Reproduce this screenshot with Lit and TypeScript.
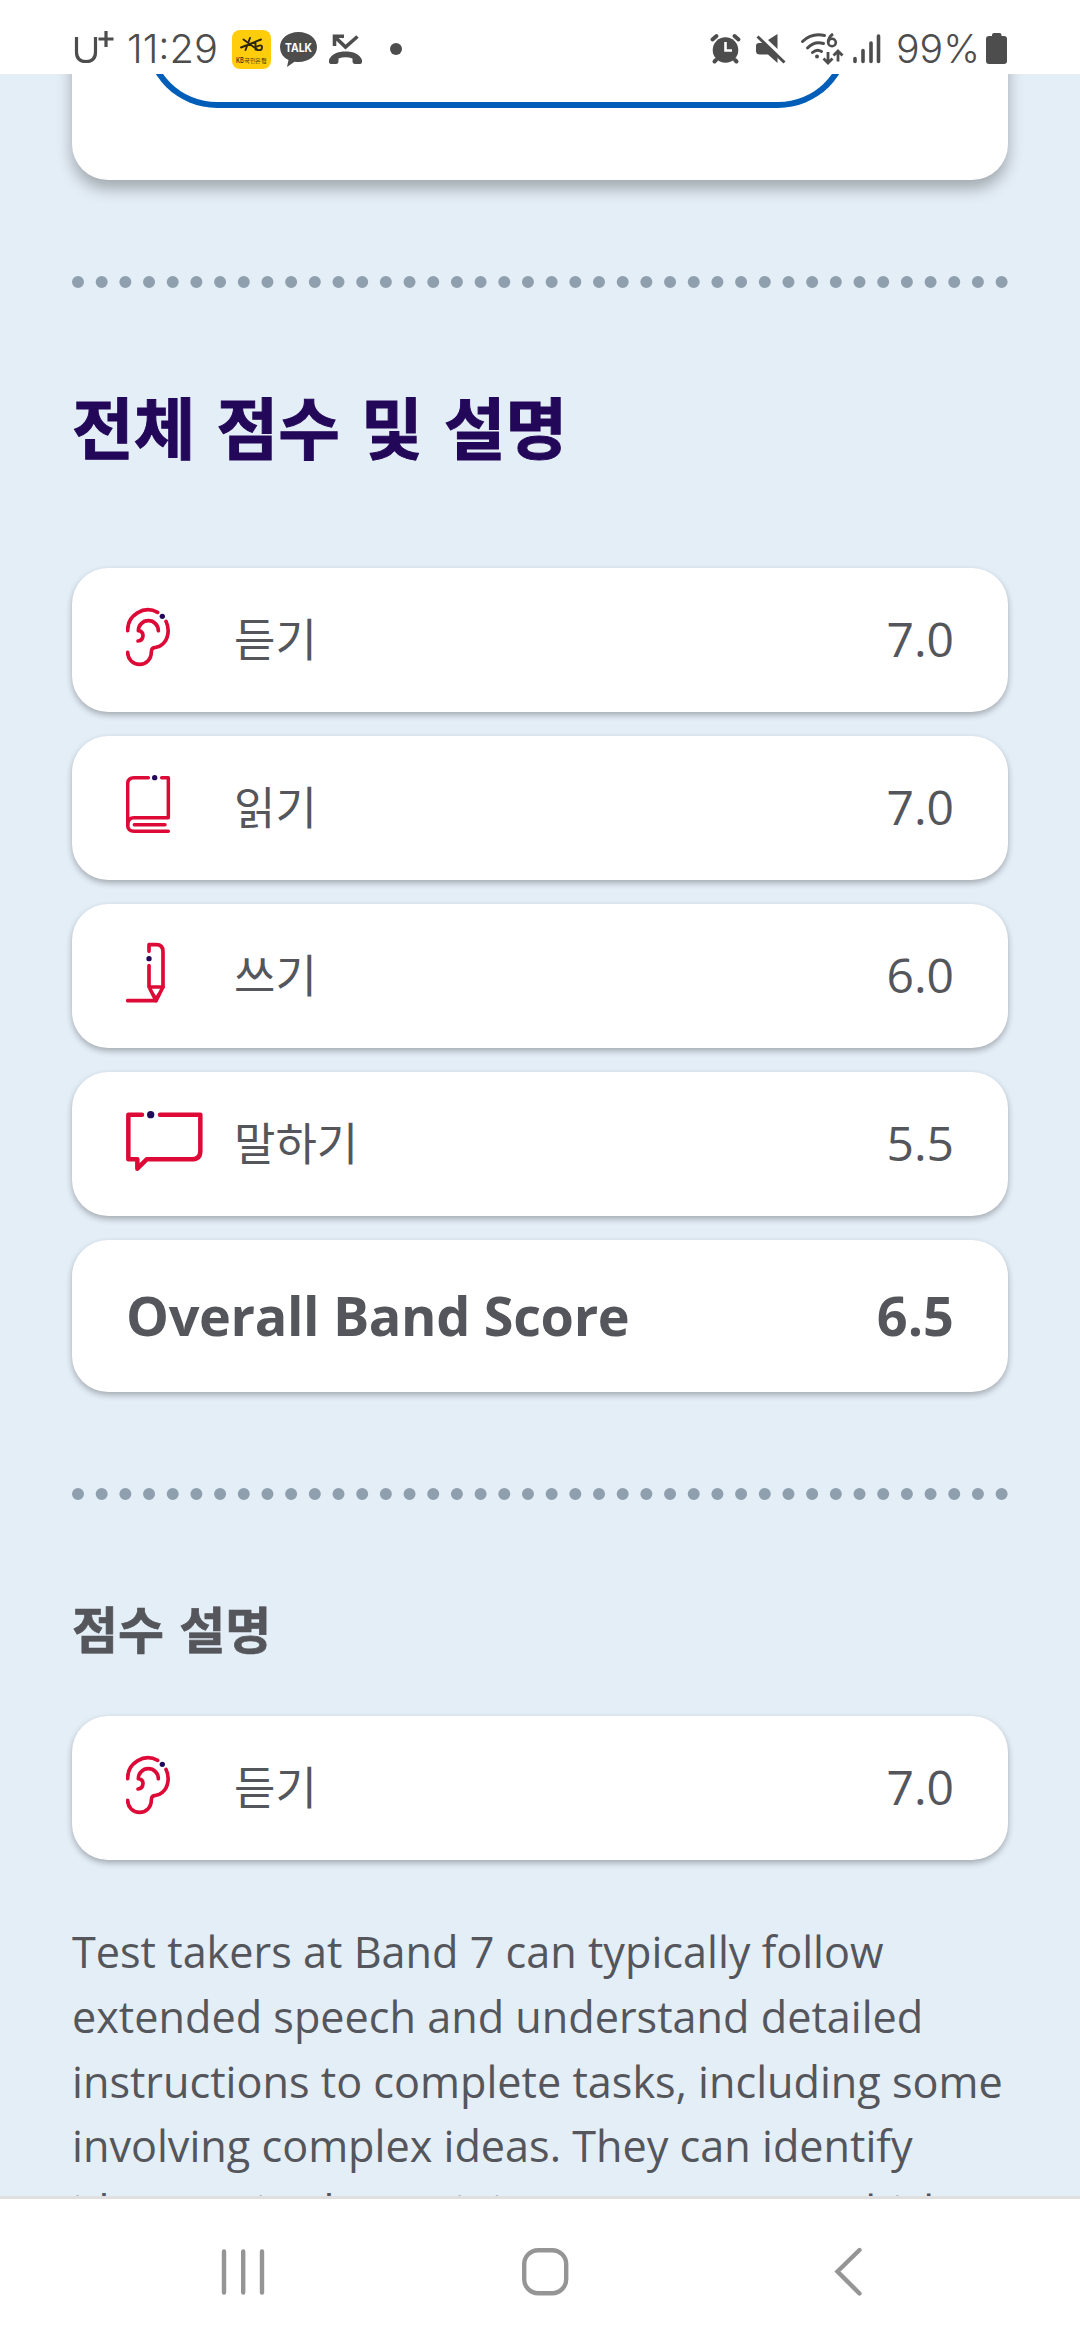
import { LitElement, html, css, svg } from "lit";
import { customElement, property } from "lit/decorators.js";

const icons: Record<string, unknown> = {
  ear: svg`<svg class="ico" viewBox="198 24 240 432" stroke-width="11">
    <path d="M203 212A61 61 0 0 1 293 157"/>
    <path d="M318 184C329 207 326 237 307 253Q298 261 287 262Q274 262 274 276C274 298 258 313 239 313C219 313 203 298 203 277"/>
    <path d="M295 212A30 30 0 0 0 235 212Q249 214 249 227Q248 242 234 243"/>
    <circle cx="307" cy="169" r="8"/></svg>`,
  book: svg`<svg class="ico" viewBox="198 528 240 432" stroke-width="10.500">
    <path d="M265 653H222Q203 653 203 672V795Q203 814 222 814H325"/>
    <path d="M305 653H325V773H222Q203 773 203 795M223 794.5H315"/>
    <circle cx="284" cy="653" r="8"/></svg>`,
  pencil: svg`<svg class="ico" viewBox="198 42 240 432" stroke-width="11">
    <path d="M267 184V164H289Q309 164 309 185V291L288 332H203"/>
    <path d="M267 227V291L288 332M267 291H309M280 315L288 329L296 315"/>
    <circle cx="267" cy="206" r="8"/></svg>`,
  speech: svg`<svg class="ico" viewBox="198 546 240 432" stroke-width="13.500">
    <path d="M246 674H205V808H232V836L260 808H395Q421 808 421 783V674H300"/>
    <circle cx="272" cy="674" r="11"/></svg>`,
};

@customElement("score-row")
class ScoreRow extends LitElement {
  @property() icon = "";
  @property() label = "";
  @property() score = "";

  static styles = css`
    :host { display: block; }
    .row {
      box-sizing: border-box; display: flex; align-items: center; height: 144px; padding: 0 54px 3px;
      background: #fff; border-radius: 36px; box-shadow: 0 3px 6px rgba(0, 0, 0, 0.29);
      color: #54565b; font-size: 48px; line-height: 66px;
    }
    .cell { display: flex; align-self: flex-start; width: 108px; height: 144px; }
    .ico { width: 80px; height: 144px; fill: none; stroke: #dd0a37; stroke-linecap: round; stroke-linejoin: round; }
    .ico circle { fill: #230859; stroke: none; }
    .label { flex: 1; font-family: "Noto Sans CJK KR", sans-serif; font-size: 45px; line-height: 64px; padding-bottom: 2px; }
    .total { height: 152px; padding-bottom: 2px; font-size: 54px; font-weight: 700; }
    .name { flex: 1; letter-spacing: -0.35px; }
  `;

  render() {
    return this.icon
      ? html`<div class="row"><span class="cell">${icons[this.icon]}</span><span class="label">${this.label}</span><span>${this.score}</span></div>`
      : html`<div class="row total"><span class="name">${this.label}</span><span>${this.score}</span></div>`;
  }
}

@customElement("status-bar")
class StatusBar extends LitElement {
  static styles = css`
    :host { display: block; }
    .bar { display: flex; height: 74px; background: #fff; color: #4d4d4d; font-family: Inter, Roboto, sans-serif; }
    svg { display: block; height: 74px; flex: none; }
    .left { width: 690px; }
    .right { width: 390px; }
    text { fill: #4d4d4d; }
    .clock { font-size: 39px; font-weight: 350; }
    .talk { fill: #fff; font-size: 11.5px; font-weight: 700; }
    .kb { fill: #2b2610; font-size: 7px; font-weight: 500; }
  `;

  render() {
    return html`<div class="bar">
      <svg class="left" viewBox="0 0 690 74" fill="none" stroke="#4d4d4d" stroke-width="3.200">
        <path d="M76.5 37V52Q76.5 61.5 86 61.5T95.500 52V37M106 31V47M98.500 39H113.500"/>
        <text class="clock" stroke="none" x="127" y="63" textLength="91" lengthAdjust="spacingAndGlyphs">11:29</text>
        <rect x="232" y="30" width="39" height="39" rx="8" fill="#ffcd0c" stroke="none"/>
        <path stroke="#2b2610" stroke-width="1.900" stroke-linecap="round" d="M241 47.500L261 39.500M243.500 39.500L258 50M250 38L245.500 50M255.500 42V49.500M256 47Q262 43.500 262 47.500T256 49.500"/>
        <text class="kb" stroke="none" x="236" y="62.500" textLength="31" lengthAdjust="spacingAndGlyphs">KB국민은행</text>
        <path fill="#4d4d4d" stroke="none" d="M298.500 32C309 32 317 38.500 317 47S309 62 298.500 62Q296.500 62 294.500 61.700L287 67L288.500 60Q280 56 280 47C280 38.500 288 32 298.500 32Z"/>
        <text class="talk" stroke="none" x="285" y="51.500" textLength="27" lengthAdjust="spacingAndGlyphs">TALK</text>
        <path stroke-width="3.600" d="M357.500 36.500L345.500 47L334.500 36.500M334.500 46V36.200H344"/>
        <path fill="#4d4d4d" stroke="none" d="M329 60C331 54 338 51.500 345.500 51.500S360 54 362 60Q362.500 64 360 64H355Q352.500 64 352.500 61V58.500Q345.500 56 338.500 58.500V61Q338.500 64 336 64H331Q328.500 64 329 60Z"/>
        <circle cx="396" cy="49" r="6" fill="#4d4d4d" stroke="none"/>
      </svg>
      <svg class="right" viewBox="690 0 390 74" fill="none" stroke="#4d4d4d" stroke-width="3">
        <circle cx="725.500" cy="50" r="12.800" fill="#4d4d4d" stroke="none"/>
        <path stroke-width="4" stroke-linecap="round" d="M712.500 39.500L716.500 36M738.500 39.500L734.500 36M716 60L714.500 61.500M735 60L736.500 61.500"/>
        <path stroke="#fff" stroke-width="2.600" d="M725.500 42V50.500H732"/>
        <path fill="#4d4d4d" stroke="none" d="M768 40L777.500 34V49ZM759 43H764L777.500 55V63L768 54.500H760Q756 54.500 756 51V46Q756 43 759 43Z"/>
        <path stroke-width="3" d="M757.500 36.500L784.500 62.500"/>
        <path stroke-linecap="round" d="M802.500 41.500Q812 32.500 824.500 35.500M807.500 48Q814.500 40.500 823.500 43.500M812.500 52.500Q817 48.500 821.500 51.500"/>
        <circle cx="817" cy="56.500" r="2" fill="#4d4d4d" stroke="none"/>
        <circle cx="832" cy="42.500" r="3.800" stroke-width="2.600"/>
        <path stroke-width="2.800" d="M833 34Q828.200 37.500 828.200 42.500M828 52V62M823.500 58.500L828 63L832.500 58.500M838 61.500V52M833.500 55.500L838 51L842.500 55.500"/>
        <path stroke-width="3.600" stroke-linecap="round" d="M855 58.500V61.500M863 50.500V61.500M871 43V61.500M878.500 36V61.500"/>
        <text class="clock" stroke="none" x="896" y="63" textLength="84" lengthAdjust="spacingAndGlyphs">99%</text>
        <path fill="#4d4d4d" stroke="none" d="M992 36V35Q992 33 994 33H999.500Q1001.500 33 1001.500 35V36H1004Q1007 36 1007 39V61Q1007 64 1004 64H989Q986 64 986 61V39Q986 36 989 36Z"/>
      </svg>
    </div>`;
  }
}

@customElement("app-root")
class AppRoot extends LitElement {
  static styles = css`
    :host { display: block; }
    .screen {
      display: flex; flex-direction: column; height: 2340px; overflow: hidden; background: #e4eef7;
      font-family: "Open Sans", "Noto Sans CJK KR", sans-serif; color: #54565b;
    }
    .content { flex: 1; min-height: 0; overflow: hidden; padding: 0 72px; }
    .card {
      display: flex; height: 206px; margin-top: -100px; padding-left: 73px; background: #fff;
      border-radius: 36px; box-shadow: 0 9px 15px rgba(0, 0, 0, 0.29);
    }
    .pill { box-sizing: border-box; width: 705px; height: 134px; border: 6px solid #005eb8; border-top: 0; border-radius: 0 0 72px 72px; }
    .dots { border-top: 12px dotted #8f9fae; }
    .first { margin-top: 96px; }
    .second { margin-top: 96px; }
    h1, h2 { margin: 0; font-family: "Noto Sans CJK KR", sans-serif; font-weight: 700; }
    h1 { margin-top: 89px; height: 96px; line-height: 96px; font-size: 67px; color: #230859; word-spacing: 6px; -webkit-text-stroke: 1px #230859; }
    h2 { margin-top: 91px; height: 72px; line-height: 72px; font-size: 50px; word-spacing: 4px; -webkit-text-stroke: 0.7px #54565b; }
    .rows { display: flex; flex-direction: column; gap: 24px; margin-top: 95px; }
    .single { margin-top: 53px; }
    p { margin: 60px 0 0; font-size: 43.2px; line-height: 64.8px; white-space: pre; }
    .nav { box-sizing: border-box; display: flex; height: 144px; background: #fff; border-top: 3px solid #e0e0e0; }
    .nav svg { width: 1080px; height: 141px; }
  `;

  render() {
    return html`<div class="screen">
      <status-bar></status-bar>
      <main class="content">
        <div class="card"><div class="pill"></div></div>
        <div class="dots first"></div>
        <h1>전체 점수 및 설명</h1>
        <div class="rows">
          <score-row icon="ear" label="듣기" score="7.0"></score-row>
          <score-row icon="book" label="읽기" score="7.0"></score-row>
          <score-row icon="pencil" label="쓰기" score="6.0"></score-row>
          <score-row icon="speech" label="말하기" score="5.5"></score-row>
          <score-row label="Overall Band Score" score="6.5"></score-row>
        </div>
        <div class="dots second"></div>
        <h2>점수 설명</h2>
        <score-row class="single" icon="ear" label="듣기" score="7.0"></score-row>
        <p>Test takers at Band 7 can typically follow
extended speech and understand detailed
instructions to complete tasks, including some
involving complex ideas. They can identify
ideas, attitudes, opinions or purpose, which</p>
      </main>
      <nav class="nav">
        <svg viewBox="0 2199 1080 141" fill="none" stroke="#959595" stroke-width="4.400" stroke-linecap="round">
          <path d="M224 2251.500V2292.500M243.200 2251.500V2292.500M262 2251.500V2292.500"/>
          <rect x="524.200" y="2250.200" width="42" height="43" rx="14"/>
          <path d="M859.500 2250L837.500 2271.500L859.500 2293.500"/>
        </svg>
      </nav>
    </div>`;
  }
}
